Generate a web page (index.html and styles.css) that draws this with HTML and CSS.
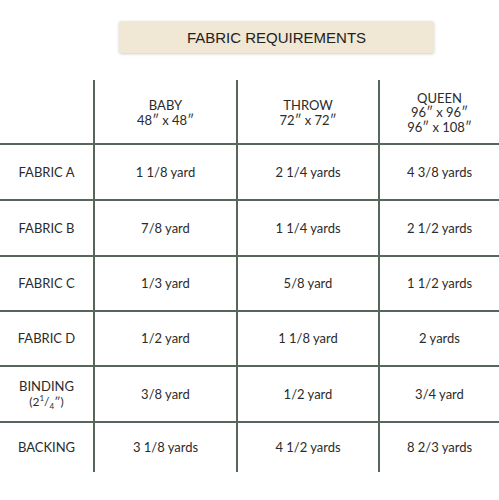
FILE: index.html
```html
<!DOCTYPE html>
<html>
<head>
<meta charset="utf-8">
<link rel="stylesheet" href="styles.css">
</head>
<body>
<div class="page">
  <div class="title">FABRIC REQUIREMENTS</div>
  <div class="grid">
    <div class="cell head"></div>
    <div class="cell head"><div>BABY<br>48″ x 48″</div></div>
    <div class="cell head"><div>THROW<br>72″ x 72″</div></div>
    <div class="cell head"><div>QUEEN<br>96″ x 96″<br>96″ x 108″</div></div>

    <div class="cell label">FABRIC A</div>
    <div class="cell">1 1/8 yard</div>
    <div class="cell">2 1/4 yards</div>
    <div class="cell">4 3/8 yards</div>

    <div class="cell label">FABRIC B</div>
    <div class="cell">7/8 yard</div>
    <div class="cell">1 1/4 yards</div>
    <div class="cell">2 1/2 yards</div>

    <div class="cell label">FABRIC C</div>
    <div class="cell">1/3 yard</div>
    <div class="cell">5/8 yard</div>
    <div class="cell">1 1/2 yards</div>

    <div class="cell label">FABRIC D</div>
    <div class="cell">1/2 yard</div>
    <div class="cell">1 1/8 yard</div>
    <div class="cell">2 yards</div>

    <div class="cell label"><div>BINDING<br><span class="small">(2<sup>1</sup>/<sub>4</sub>″)</span></div></div>
    <div class="cell">3/8 yard</div>
    <div class="cell">1/2 yard</div>
    <div class="cell">3/4 yard</div>

    <div class="cell label">BACKING</div>
    <div class="cell">3 1/8 yards</div>
    <div class="cell">4 1/2 yards</div>
    <div class="cell">8 2/3 yards</div>
  </div>
</div>
</body>
</html>
```
FILE: styles.css
```css
html, body {
  margin: 0;
  padding: 0;
  background: #ffffff;
}
.page {
  width: 499px;
  padding-top: 21px;
}
.title {
  margin-left: 119px;
  width: 315px;
  height: 32px;
  box-sizing: border-box;
  background: #f0e7d4;
  border-radius: 3px;
  box-shadow: 0 1px 3px rgba(120, 110, 90, 0.35);
  font-family: "Liberation Sans", Arial, sans-serif;
  font-size: 15px;
  color: #222;
  display: flex;
  align-items: center;
  justify-content: center;
}
.grid {
  margin-top: 27px;
  display: grid;
  grid-template-columns: 93px 141px 140px 1fr;
  grid-template-rows: 63px 54px 54px 53px 53px 54px 49px;
  gap: 2px;
  background: #56665a;
}
.cell {
  background: #ffffff;
  display: flex;
  align-items: center;
  justify-content: center;
  text-align: center;
  font-family: "Lato", "Open Sans", sans-serif;
  font-size: 13px;
  line-height: 15px;
  color: #2b2b2b;
}
.head {
  line-height: 14.5px;
  padding-top: 2px;
  box-sizing: border-box;
}
.small {
  font-size: 12px;
}
sup, sub {
  font-size: 8px;
  line-height: 0;
}
```
